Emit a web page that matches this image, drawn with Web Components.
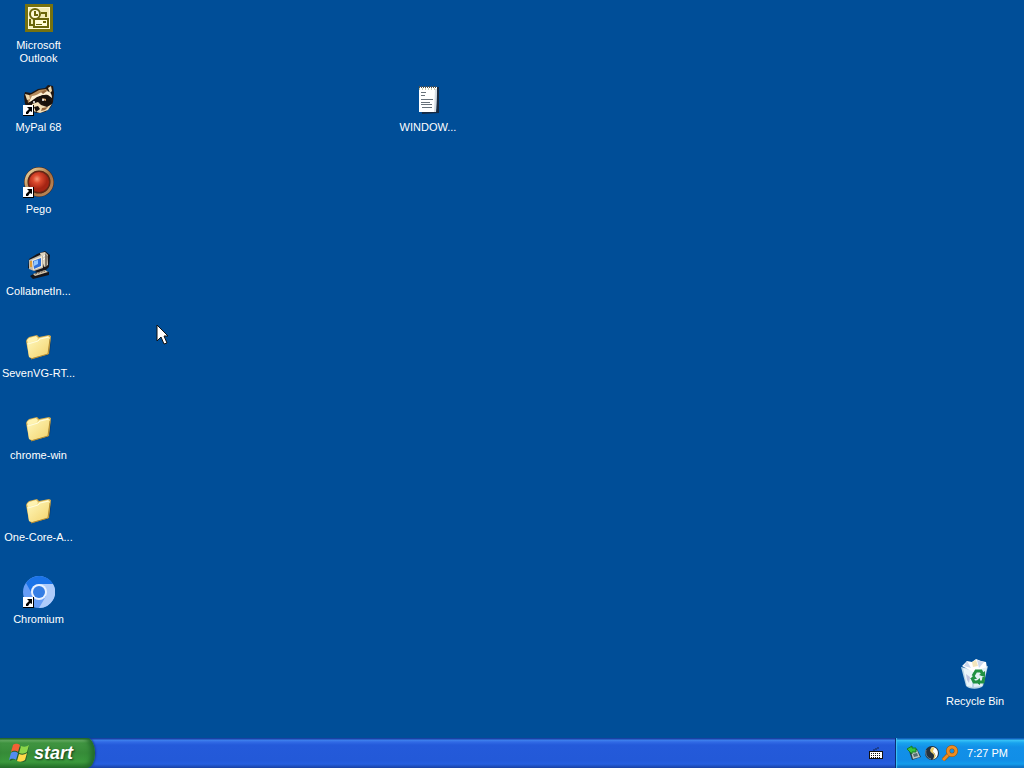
<!DOCTYPE html>
<html lang="en">
<head>
<meta charset="utf-8">
<title>Desktop</title>
<style>
html, body { height: 100%; margin: 0; }
body { font: 11px/13px "Liberation Sans", Arial, sans-serif; color: #fff; background: #004e98; overflow: hidden; }
</style>
</head>
<body>
<xp-desktop></xp-desktop>

<template id="desktop-template">
<style>
:host { display: flex; flex-direction: column; height: 100vh; position: relative; }
main { flex: 1; position: relative; min-height: 0; padding-top: 2px; box-sizing: border-box; }
.column { display: grid; grid-auto-rows: 82px; width: 77px; }
.loose { position: absolute; width: 78px; }
.notes { left: 389px; top: 84px; }
.bin { right: 10px; bottom: 30px; }
.pointer { position: absolute; left: 156px; top: 324px; width: 14px; height: 23px; }
</style>
<main>
<div class="column">
<desktop-icon label="Microsoft Outlook">
<svg viewBox="0 0 32 32"><path fill="#77720f" d="M2 2h28v28H2z"/><path fill="#fffbd8" d="M5 5h22v22H5z"/><path fill="#f3edb6" d="M6 6h20v20H6z"/><g fill="none" stroke="#69650a" stroke-width="2"><path d="M7 17v6h4"/><path fill="#fffbd8" d="M11 17h14v8H11z"/><path d="M18 11h5v4"/><circle cx="12" cy="12" r="5" fill="#fffbd8"/><path d="M12 9v4h3"/></g><path fill="#69650a" d="M20 19h3v2h-3zM13 22h6v1h-6z"/></svg>
</desktop-icon>
<desktop-icon label="MyPal 68" shortcut>
<svg viewBox="0 0 32 32"><path fill="#20150f" d="M1 12l1-4 6 1 7-4 7-1 3-3 5 1 1 7-1 9-2 5-6 5-8 1-7-2-5-7z"/><path fill="#b58b5c" d="M4 12l5-2 7-4 7-1 2 2-8 4-7 5-5 3z"/><path fill="#eed8ac" d="M2 10l4 1 1 4-3 1zM25 4l3-2 1 5-2 2z"/><path fill="#fff0d3" d="M9 12c5 0 9-5 15-5 4 1 5 4 5 7l-4-3c-5-1-9 1-14 6l-5 1z"/><path fill="#17100c" d="M7 18l7-5 6-2 6 2 3 6-3 3-6-2-4-3-6 4z"/><path fill="#f4dfb8" d="M9 20l6-2 3 3 6 2 5-3-4 6-8 3-7-2z"/><path fill="#93663e" d="M18 8l4-2 2 1-4 3zM19 24l6-1-3 3-4 1z"/><path fill="#d5a66c" d="M19 14l4 1v2l-3-1z"/><circle cx="20" cy="16" r="1" fill="#fff"/><circle cx="11" cy="18" r="1" fill="#fff"/><path fill="#17100c" d="M11 23l4-1 2 3-4 3z"/></svg>
</desktop-icon>
<desktop-icon label="Pego" shortcut>
<svg viewBox="0 0 32 32"><defs><radialGradient id="ball" cx=".4" cy=".35"><stop stop-color="#f69a78"/><stop offset=".4" stop-color="#dc4a2e"/><stop offset="1" stop-color="#a52413"/></radialGradient><linearGradient id="rim" x2="1" y2="1"><stop stop-color="#f0dda7"/><stop offset=".55" stop-color="#a76e3f"/><stop offset="1" stop-color="#bd8b5d"/></linearGradient></defs><circle cx="16" cy="16" r="15" fill="#4c2615"/><circle cx="16" cy="16" r="13" fill="none" stroke="url(#rim)" stroke-width="3"/><circle cx="16" cy="16" r="11" fill="#6b2415"/><circle cx="16" cy="16" r="10" fill="url(#ball)"/></svg>
</desktop-icon>
<desktop-icon label="CollabnetIn...">
<svg viewBox="0 0 32 32"><path fill="#15151a" d="M14 6l8-3 5 4-1 12-4 4 4 1v3l-16 4-3-3 7-4-9-4 1-9z"/><path fill="#dfd6c1" d="M17 5l5-1 3 3v10l-4 2z"/><path fill="#81786c" d="M22 5l3 3-1 10-2 1z"/><path fill="#c2b9aa" d="M6 12l11-5 3 1v12l-9 3-5-2z"/><path fill="#f4ead5" d="M9 12l10-4v11l-9 3z"/><path fill="#2d6fda" d="M10 13l8-3v8l-7 3z"/><path fill="#92c7ff" d="M11 13l4-1v4l-4 2z"/><path fill="#d4c6ad" d="M10 26l12-4 3 2-13 4z"/><path stroke="#564f48" stroke-dasharray="2 1" d="M12 26l10-3"/><path fill="#df9b34" d="M7 13h2v6H7z"/><path fill="#fff" d="M20 8l2-1v1l-2 1zM20 11l2-1v1l-2 1z"/></svg>
</desktop-icon>
<desktop-icon label="SevenVG-RT..." kind="folder"></desktop-icon>
<desktop-icon label="chrome-win" kind="folder"></desktop-icon>
<desktop-icon label="One-Core-A..." kind="folder"></desktop-icon>
<desktop-icon label="Chromium" shortcut>
<svg viewBox="0 0 32 32"><circle cx="16" cy="16" r="16" fill="#669df6"/><path fill="#aecbfa" d="M16 8h14a16 16 0 0 1-14 24l7-12z"/><path fill="#1a73e8" d="M3 7a16 16 0 0 1 27 1H16c-5 0-8 4-8 8z"/><circle cx="16" cy="16" r="8" fill="#e8f1ff"/><circle cx="16" cy="16" r="6" fill="#347de4"/></svg>
</desktop-icon>
</div>
<desktop-icon class="loose notes" label="WINDOW...">
<svg viewBox="0 0 32 32"><path fill="#172a42" d="M8 3h19v26l-17 1z"/><path fill="#fff" d="M7 3h18l-1 25H7z"/><path fill="#d5dce3" d="M23 5h2l-1 23h-2z"/><path stroke="#56534a" stroke-width="2" stroke-dasharray="1 1" d="M7 3h18"/><path stroke="#93a05e" stroke-dasharray="1 2" d="M7 5h17"/><path fill="#68717a" d="M9 8h5v1H9zM9 11h4v1H9zM9 15h12v1H9zM9 18h9v1H9zM9 20h11v1H9zM10 23h10v1H10z"/></svg>
</desktop-icon>
<desktop-icon class="loose bin" label="Recycle Bin">
<svg viewBox="0 0 32 32"><path fill="#173c64" opacity=".4" d="M7 12l20-5-4 22-12 1z"/><path fill="#b9d4e5" d="M2 9l5 19c2 3 13 4 17 0l5-20-12 4z"/><path fill="#eaf5fa" d="M4 10l10 3-1 16-5-1z"/><path fill="#fff" d="M3 8l5-5 5 1 4-3 5 2 5 1 1 6-12 5z"/><path fill="#ccd8ed" d="M8 3l4 7-7-2zM18 2l2 8 5-6z"/><path fill="#f3e6bd" d="M13 4l4-2 2 6-5 1z"/><path fill="#e2f0f6" d="M16 13l12-4-5 19-8 1z"/><path fill="#bfc4df" d="M7 16l4 3-1 6-2-3z"/><g fill="none" stroke="#219143" stroke-width="3"><path d="M14 18l3-5h5l2 4M25 19l-1 5h-5M13 20l2 4h3"/></g><path fill="#219143" d="M20 17l6-4v6zM21 20v7l-5-3zM11 21l4-4 3 4z"/></svg>
</desktop-icon>
<svg class="pointer" viewBox="0 0 14 23" aria-hidden="true"><path fill="#fff" stroke="#111" d="M1 1v16l4-4 3 7 3-1-3-7h4z"/></svg>
</main>
<xp-taskbar></xp-taskbar>
</template>

<template id="icon-template">
<style>
:host { display: block; text-align: center; }
a { display: flex; flex-direction: column; align-items: center; gap: 5px; color: inherit; text-decoration: none; cursor: default; }
.picture { position: relative; width: 32px; height: 32px; }
.picture > svg:not(.arrow), ::slotted(svg) { display: block; width: 32px; height: 32px; }
.arrow { display: none; }
:host([shortcut]) .arrow { display: block; position: absolute; left: 0; bottom: 0; width: 11px; height: 11px; }
.label { max-width: 75px; }
</style>
<a href="#"><span class="picture"><slot></slot><svg class="arrow" viewBox="0 0 11 11"><path d="M0 0h11v11H0z"/><path fill="#fff" d="M0 0h10v10H0z"/><path d="M4 2h5v5L7 6 5 9H3V7l3-3z"/></svg></span><span class="label"></span></a>
</template>

<template id="folder-template">
<svg viewBox="0 0 32 32"><defs><linearGradient id="paper" x2="1" y2="1"><stop stop-color="#fff9bd"/><stop offset="1" stop-color="#f3d26c"/></linearGradient></defs><path fill="#0b223e" opacity=".6" d="M7 29l17-4 3-3 1-15-3 18z"/><path fill="#d3ad51" d="M3 11l1-2 2-2 8-2 2 2 10-2 2 1-2 18-17 5-3-2z"/><path fill="#fff3b0" d="M4 10l2-2 7-2 2 2-1 3-9 3zM17 8l8-2 1 2-10 3z"/><path fill="url(#paper)" d="M4 13l10-3 2-2 11-1-2 17-16 4-3-1z"/><path fill="none" stroke="#fffde0" d="M5 14l10-3 2-2 9-2"/><path fill="none" stroke="#b08a34" d="M8 29l17-5 2-15"/></svg>
</template>

<template id="taskbar-template">
<style>
:host { display: flex; height: 30px; flex: none; background: linear-gradient(#1941a5 0 1px, #3f83ee 2px, #316ae5 4px, #245ada 7px, #2359d8 22px, #265fdf 26px, #1941a5); }
button { font: inherit; color: inherit; border: 0; padding: 0; background: none; }
.start { display: flex; align-items: center; gap: 4px; width: 95px; padding-left: 9px; border-radius: 0 8px 8px 0 / 0 15px 15px 0; background: linear-gradient(#276c2b 0 1px, #6eb36a 2px, #409441 5px, #368b38 15px, #3a993c 24px, #25712a); box-shadow: inset -4px 0 5px #226b2a, 1px 0 2px #173d93; font: italic bold 18px/28px "Liberation Sans", Arial, sans-serif; text-shadow: 1px 1px 2px #173d1a; }
.start svg { width: 21px; height: 22px; }
.space { flex: 1; }
.keyboard { width: 14px; margin-right: 12px; display: flex; align-items: center; }
.keyboard svg { width: 14px; height: 14px; display: block; }
.tray { box-sizing: border-box; width: 129px; display: flex; align-items: center; padding: 0 16px 0 10px; border-left: 1px solid #092e75; background: linear-gradient(#0c59b9 0 1px, #3ac5f7 2px, #18a2ee 5px, #1290e8 9px, #118ee7 22px, #139ceb 26px, #0b64b8); box-shadow: inset 1px 0 1px #41c5f3; }
.tray button { width: 18px; height: 16px; }
.tray svg { display: block; width: 16px; height: 16px; }
time { margin-left: auto; white-space: nowrap; }
</style>
<button class="start"><svg viewBox="0 0 21 22" aria-hidden="true"><path fill="#193e20" opacity=".6" d="M4 4c4-2 5 0 7 1 3 1 5 1 9-1l-3 15c-6 3-7 0-10-1-2-1-4 0-6 1z"/><path fill="#f26135" d="M4 3c3-2 5-1 7 0L9 10c-3-2-5-1-7 0z"/><path fill="#8bd64a" d="M12 4c3 1 5 1 8-1l-2 7c-3 2-5 2-8 1z"/><path fill="#548cf0" d="M2 11c3-2 5-1 7 0l-2 7c-3-2-5-1-7 0z"/><path fill="#ffd949" d="M10 12c3 1 5 1 8-1l-2 7c-3 2-5 2-8 1z"/></svg>start</button>
<span class="space"></span>
<button class="keyboard" aria-label="Keyboard layout"><svg viewBox="0 0 14 14"><path fill="none" stroke="#142447" stroke-dasharray="2 1" d="M5 5V3h4V1"/><path fill="#111" d="M0 5h14v8H0z"/><path fill="#fff" d="M1 6h12v6H1z"/><path stroke="#111" stroke-dasharray="1 1" d="M2 7h10M2 9h10M2 11h10" shape-rendering="crispEdges"/></svg></button>
<div class="tray">
<button aria-label="Safely remove hardware"><svg viewBox="0 0 16 16"><path fill="#263e48" d="M3 6l8-2 4 8-9 3z"/><path fill="#b9c6c5" d="M5 7l6-2 3 7-7 2z"/><path fill="#536b70" d="M7 9l4-1 1 3-4 1z"/><path fill="#38c43c" stroke="#147b26" d="M1 4l5-3v2h4v4H6v2z"/></svg></button>
<button aria-label="System utility"><svg viewBox="0 0 16 16"><circle cx="8" cy="8" r="7" fill="#24313d"/><path fill="#fff" d="M9 2c6 1 6 8 3 11l-4 2c4-3 4-5 2-7L7 6c-1-2 0-4 2-4z"/><path fill="#e9cd69" d="M9 2c2 1 1 2 0 4 0 2 4 4 2 7l-2 1c2-3 1-5-1-6-3-2-2-4 1-6z"/><path fill="none" stroke="#71899b" d="M2 5c-1 4 1 8 5 9"/></svg></button>
<button aria-label="Search everything"><svg viewBox="0 0 16 16"><circle cx="10" cy="6" r="4" fill="none" stroke="#8e500d" stroke-width="4"/><path stroke="#8e500d" stroke-width="4" d="M6 10l-5 5"/><circle cx="10" cy="6" r="4" fill="none" stroke="#ed8c22" stroke-width="3"/><path stroke="#ed8c22" stroke-width="3" d="M6 10l-5 5"/></svg></button>
<time datetime="19:27">7:27 PM</time>
</div>
</template>

<script>
class TemplateElement extends HTMLElement {
  constructor() {
    super();
    const template = document.getElementById(this.constructor.template);
    this.attachShadow({ mode: "open" }).append(template.content.cloneNode(true));
  }
}
class DesktopIcon extends TemplateElement {
  static template = "icon-template";
  connectedCallback() {
    this.shadowRoot.querySelector(".label").textContent = this.getAttribute("label");
    const slot = this.shadowRoot.querySelector("slot");
    if (slot && this.getAttribute("kind") === "folder") {
      slot.replaceWith(document.getElementById("folder-template").content.cloneNode(true));
    }
  }
}
class XpTaskbar extends TemplateElement { static template = "taskbar-template"; }
class XpDesktop extends TemplateElement { static template = "desktop-template"; }
customElements.define("desktop-icon", DesktopIcon);
customElements.define("xp-taskbar", XpTaskbar);
customElements.define("xp-desktop", XpDesktop);
</script>
</body>
</html>
